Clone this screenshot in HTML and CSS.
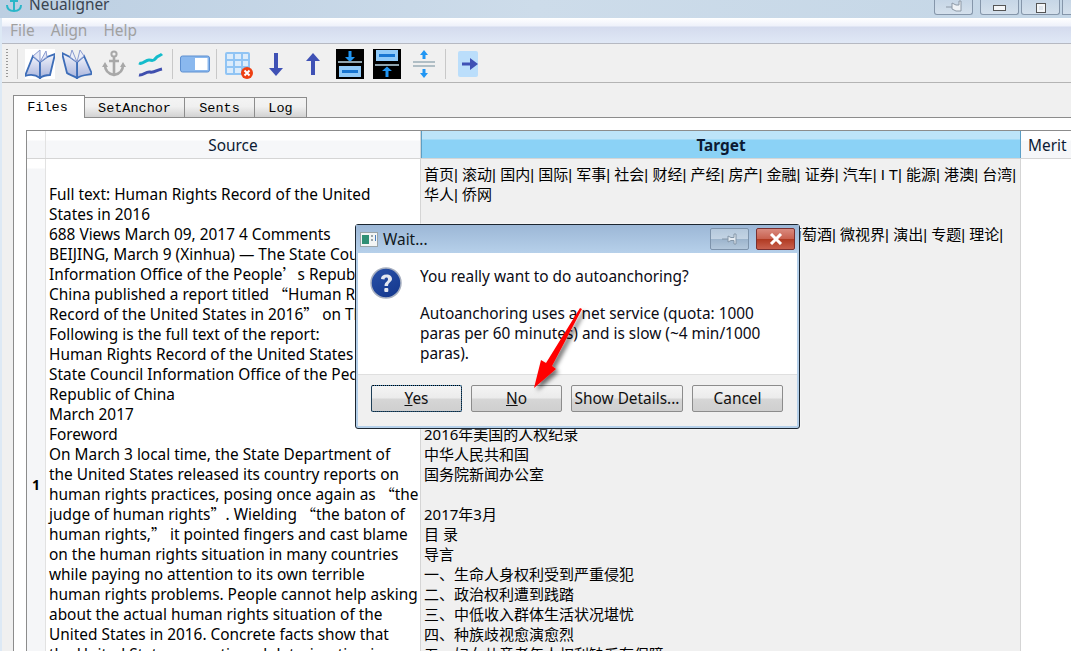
FILE: index.html
```html
<!DOCTYPE html>
<html>
<head>
<meta charset="utf-8">
<title>Neualigner</title>
<link rel="stylesheet" href="styles.css">
</head>
<body>

<div id="titlebar">
	<svg class="titleicon" width="16" height="14" viewBox="0 0 16 14"><path d="M8 0V12M4 2H12M1 6C1 10 4 12 8 12C12 12 15 10 15 6" fill="none" stroke="#2ab6c8" stroke-width="2"/></svg>
	<span class="titletext">Neualigner</span>
	<div class="winbuttons">
		<div class="winbtn pinbtn"><svg width="18" height="14" viewBox="0 0 18 14"><path d="M1 7H7M7 3L11 5H14V1H16V11H11L7 9Z" fill="#eef2f6" stroke="#8c98a6"/></svg></div>
		<div class="winbtn minbtn"><span class="minmark"></span></div>
		<div class="winbtn maxbtn"><span class="maxmark"></span></div>
		<div class="winbtn closebtn"></div>
	</div>
</div>

<div id="window">

	<div id="menubar">
		<span class="menuitem">File</span>
		<span class="menuitem">Align</span>
		<span class="menuitem">Help</span>
	</div>

	<div id="toolbar">
		<div class="grip"></div>
		<div class="toolsep"></div>
		<div class="toolbtn">
			<svg width="30" height="30" viewBox="0 0 30 30">
				<defs><linearGradient id="pagefill" x1="0" y1="0" x2="0" y2="1"><stop offset="0" stop-color="#f2f4fb"/><stop offset="1" stop-color="#a9b4dc"/></linearGradient></defs>
				<rect width="30" height="30" fill="#fff"/>
				<path d="M15 29C11 26 6 25 0 27L8 7L15 13Z" fill="url(#pagefill)" stroke="#3d6db8" stroke-width="1.8"/>
				<path d="M15 29C19 26 24 26 25 26L30 5L22 8L15 13Z" fill="url(#pagefill)" stroke="#3d6db8" stroke-width="1.8"/>
				<path d="M8 7L15 1L15 13L21 2L22 8L15 13Z" fill="#e4e8f6" stroke="#8a9bd0"/>
			</svg>
		</div>
		<div class="toolbtn">
			<svg width="30" height="30" viewBox="0 0 30 30">
				<path d="M15 29C19 26 24 26 30 25L22 7L15 13Z" fill="url(#pagefill)" stroke="#3d6db8" stroke-width="1.8"/>
				<path d="M15 29C11 26 7 26 5 24L0 4L8 8L15 13Z" fill="url(#pagefill)" stroke="#3d6db8" stroke-width="1.8"/>
				<path d="M8 8L10 1L15 13L18 1L22 7L15 13Z" fill="#eceff9" stroke="#8a9bd0"/>
			</svg>
		</div>
		<div class="toolbtn">
			<svg width="30" height="30" viewBox="0 0 30 30"><circle cx="15" cy="5" r="2.6" fill="none" stroke="#a8a8a8" stroke-width="2"/><path d="M15 8V26M10 12H20M6 16C6 22 10 25 15 26C20 25 24 22 24 16" fill="none" stroke="#a8a8a8" stroke-width="2.6"/><path d="M3 18L6 13L9 18ZM21 18L24 13L27 18Z" fill="#a8a8a8"/></svg>
		</div>
		<div class="toolbtn">
			<svg width="30" height="30" viewBox="0 0 30 30"><path d="M3 14C7 16 9 11 13 11C16 11 17 13 20 9C21 7 24 7 26 5" fill="none" stroke="#14bccb" stroke-width="3"/><path d="M3 26C7 27 10 22 14 23C18 24 21 21 26 20" fill="none" stroke="#3f4fae" stroke-width="3"/></svg>
		</div>
		<div class="toolsep"></div>
		<div class="toolbtn">
			<svg width="30" height="30" viewBox="0 0 30 30"><rect x="0.5" y="7" width="29" height="16" rx="2" fill="#8ab8ee" stroke="#5d8fd0"/><rect x="15" y="9" width="12.5" height="12" fill="#fff"/></svg>
		</div>
		<div class="toolsep"></div>
		<div class="toolbtn">
			<svg width="30" height="30" viewBox="0 0 30 30"><rect x="2" y="4" width="23" height="21" rx="1" fill="#dcecfb" stroke="#90c4f4" stroke-width="2"/><path d="M2 11H25M2 18H25M10 4V25M18 4V25" stroke="#90c4f4" stroke-width="2"/><circle cx="23" cy="24" r="6" fill="#ee3f12"/><path d="M20.5 21.5L25.5 26.5M25.5 21.5L20.5 26.5" stroke="#fff" stroke-width="2"/></svg>
		</div>
		<div class="toolbtn">
			<svg width="30" height="30" viewBox="0 0 30 30"><path d="M13 4H17V19H22L15 27L8 19H13Z" fill="#3f51b5"/></svg>
		</div>
		<div class="toolbtn">
			<svg width="30" height="30" viewBox="0 0 30 30"><path d="M13 26H17V12H22L15 4L8 12H13Z" fill="#3f51b5"/></svg>
		</div>
		<div class="toolbtn">
			<svg width="28" height="30" viewBox="0 0 28 30"><rect width="28" height="30" fill="#000"/><path d="M12.5 2H15.5V8H19L14 13L9 8H12.5Z" fill="#2196f3"/><rect x="2" y="12" width="24" height="2" fill="#90a4ae"/><rect x="3" y="17" width="22" height="11" fill="#90caf9"/><rect x="6" y="21" width="16" height="3" fill="#1976d2"/></svg>
		</div>
		<div class="toolbtn">
			<svg width="28" height="30" viewBox="0 0 28 30"><rect width="28" height="30" fill="#000"/><rect x="3" y="1" width="22" height="11" fill="#90caf9"/><rect x="6" y="5" width="16" height="3" fill="#1976d2"/><rect x="2" y="15" width="24" height="2" fill="#90a4ae"/><path d="M12.5 28H15.5V22H19L14 17.5L9 22H12.5Z" fill="#2196f3"/></svg>
		</div>
		<div class="toolbtn">
			<svg width="30" height="30" viewBox="0 0 30 30"><path d="M13.5 10H16.5V6H19L15 1L11 6H13.5ZM13.5 20H16.5V24H19L15 29L11 24H13.5Z" fill="#2196f3"/><rect x="4" y="12" width="22" height="2" fill="#b0bec5"/><rect x="4" y="16" width="22" height="2" fill="#b0bec5"/></svg>
		</div>
		<div class="toolsep"></div>
		<div class="toolbtn">
			<svg width="20" height="26" viewBox="0 0 20 26"><rect width="20" height="26" rx="2" fill="#bbdefb"/><path d="M4 11.5H12V7L20 13L12 19V14.5H4Z" fill="#3f51b5"/></svg>
		</div>
	</div>

	<div id="tabarea">
		<div id="tabs">
			<div class="tab tabactive">Files</div>
			<div class="tab tabsetanchor">SetAnchor</div>
			<div class="tab tabsents">Sents</div>
			<div class="tab tablog">Log</div>
		</div>

		<div id="tabpane">
			<div id="grid">
				<div class="headrow">
					<div class="corner"></div>
					<div class="colhead sourcehead">Source</div>
					<div class="colhead targethead">Target</div>
					<div class="colhead merithead">Merit</div>
				</div>
				<div class="datarow">
					<div class="rownum">1</div>
					<div class="cell sourcecell">
						<div>&nbsp;</div>
						<div>Full text: Human Rights Record of the United</div>
						<div>States in 2016</div>
						<div>688 Views March 09, 2017 4 Comments</div>
						<div>BEIJING, March 9 (Xinhua) — The State Council</div>
						<div>Information Office of the People<span class="wq">’</span>s Republic of</div>
						<div>China published a report titled <span class="wq">“</span>Human Rights</div>
						<div>Record of the United States in 2016<span class="wq">”</span> on Thursday.</div>
						<div>Following is the full text of the report:</div>
						<div>Human Rights Record of the United States in 2016</div>
						<div>State Council Information Office of the People's</div>
						<div>Republic of China</div>
						<div>March 2017</div>
						<div>Foreword</div>
						<div>On March 3 local time, the State Department of</div>
						<div>the United States released its country reports on</div>
						<div>human rights practices, posing once again as <span class="wq">“</span>the</div>
						<div>judge of human rights<span class="wq">”</span>. Wielding <span class="wq">“</span>the baton of</div>
						<div>human rights,<span class="wq">”</span> it pointed fingers and cast blame</div>
						<div>on the human rights situation in many countries</div>
						<div>while paying no attention to its own terrible</div>
						<div>human rights problems. People cannot help asking</div>
						<div>about the actual human rights situation of the</div>
						<div>United States in 2016. Concrete facts show that</div>
						<div>the United States, a continued deterioration in</div>
					</div>
					<div class="cell targetcell">
						<div class="navline">首页| 滚动| 国内| 国际| 军事| 社会| 财经| 产经| 房产| 金融| 证券| 汽车| I T| 能源| 港澳| 台湾|</div>
						<div class="navline">华人| 侨网</div>
						<div>&nbsp;</div>
						<div class="navline navindent">葡萄酒| 微视界| 演出| 专题| 理论|</div>
						<div>&nbsp;</div>
						<div>&nbsp;</div>
						<div>&nbsp;</div>
						<div>&nbsp;</div>
						<div>&nbsp;</div>
						<div>&nbsp;</div>
						<div>&nbsp;</div>
						<div>&nbsp;</div>
						<div>&nbsp;</div>
						<div>2016年美国的人权纪录</div>
						<div>中华人民共和国</div>
						<div>国务院新闻办公室</div>
						<div>&nbsp;</div>
						<div>2017年3月</div>
						<div>目 录</div>
						<div>导言</div>
						<div>一、生命人身权利受到严重侵犯</div>
						<div>二、政治权利遭到践踏</div>
						<div>三、中低收入群体生活状况堪忧</div>
						<div>四、种族歧视愈演愈烈</div>
						<div>五、妇女儿童老年人权利缺乏有保障</div>
					</div>
					<div class="cell meritcell"></div>
				</div>
			</div>
		</div>
	</div>

</div> <!-- ends div#window -->

<div id="dialog">
	<div class="dlgtitle">
		<svg class="dlgicon" width="18" height="15" viewBox="0 0 18 15"><rect x="0.5" y="0.5" width="17" height="14" fill="#f2f4f4" stroke="#9aa4a8"/><rect x="2" y="3" width="7" height="9" fill="#2f8f74"/><rect x="11" y="3" width="2" height="2" fill="#9aa4a8"/><rect x="11" y="7" width="2" height="2" fill="#9aa4a8"/><rect x="15" y="3" width="1" height="6" fill="#4a7fc0"/></svg>
		<span class="dlgcaption">Wait...</span>
		<div class="dlgpin"><svg width="18" height="12" viewBox="0 0 18 12"><path d="M1 6H7M7 3L10 4.5H13V1H15V11H13V7.5H10L7 9Z" fill="#e6ecf2" stroke="#8496a8"/></svg></div>
		<div class="dlgclose"><svg width="14" height="12" viewBox="0 0 14 12"><path d="M2 1L12 11M12 1L2 11" stroke="#fff" stroke-width="3"/></svg></div>
	</div>
	<div class="dlgbody">
		<svg class="dlgquestion" width="32" height="32" viewBox="0 0 32 32">
			<defs><linearGradient id="qfill" x1="0" y1="0" x2="0.6" y2="1"><stop offset="0" stop-color="#2a52a8"/><stop offset="1" stop-color="#163a90"/></linearGradient></defs>
			<circle cx="16" cy="16" r="15" fill="url(#qfill)" stroke="#a8b0c0" stroke-width="1.5"/>
			<path d="M11 12C11 9 13 7.5 16.5 7.5C20 7.5 22 9.5 22 12C22 15 18 15.500 18 19H14.500C14.500 15 18 14.500 18 12.500C18 11 17.500 10.500 16.300 10.500C15 10.500 14.500 11.500 14.500 12.500Z" fill="#e4e8f0"/>
			<rect x="14.300" y="21" width="4" height="4" rx="1" fill="#e4e8f0"/>
		</svg>
		<div class="dlgtext">
			<div class="dlgask">You really want to do autoanchoring?</div>
			<div>Autoanchoring uses a net service (quota: 1000</div>
			<div>paras per 60 minutes) and is slow (~4 min/1000</div>
			<div>paras).</div>
		</div>
	</div>
	<div class="dlgfooter">
		<div class="dlgbtn btndefault"><span class="focusbox"><u>Y</u>es</span></div>
		<div class="dlgbtn"><span><u>N</u>o</span></div>
		<div class="dlgbtn btnwide"><span>Show Details...</span></div>
		<div class="dlgbtn"><span>Cancel</span></div>
	</div>
</div>

<svg id="redarrow" width="70" height="100" viewBox="0 0 70 100">
	<defs><filter id="ashadow" x="-30%" y="-30%" width="160%" height="160%"><feDropShadow dx="3" dy="3" stdDeviation="2" flood-color="#000" flood-opacity="0.55"/></filter></defs>
	<path d="M55 5L57 6L27 63L31 66L9 85L16 57L21 60Z" fill="#f00" filter="url(#ashadow)"/>
</svg>

</body>
</html>
```

FILE: styles.css
```css
html, body{
	margin: 0;
	padding: 0;
}

body{
	position: relative;
	width: 1071px;
	height: 651px;
	overflow: hidden;
	background: #dde9f5;
	font-family: "Noto Sans", "Noto Sans CJK SC", sans-serif;
	font-size: 15.4px;
	color: #000;
}

#titlebar{
	height: 18px;
	display: flex;
	align-items: flex-end;
	background: linear-gradient(to right, #bccfe2, #cddcea 50%, #c4d6e6);
	overflow: hidden;
}

.titleicon{
	margin: 0 0 5px 6px;
}

.titletext{
	margin-left: 7px;
	color: #3a4450;
	line-height: 20px;
	margin-bottom: 3px;
}

.winbuttons{
	margin-left: auto;
	display: flex;
	align-self: flex-start;
}

.winbtn{
	box-sizing: border-box;
	height: 15px;
	border: 1px solid #8596aa;
	border-top: none;
	border-radius: 0 0 3px 3px;
	background: linear-gradient(to bottom, #c6d6e6, #d4e0ec);
	display: flex;
	align-items: flex-end;
	justify-content: center;
}

.pinbtn{
	width: 39px;
	margin-right: 7px;
}

.minbtn{
	width: 39px;
	margin-right: 2px;
}

.maxbtn{
	width: 39px;
	margin-right: 2px;
}

.closebtn{
	width: 9px;
	border-right: none;
	border-radius: 0;
}

.minmark{
	width: 11px;
	height: 4px;
	margin-bottom: 3px;
	background: #f4f6f8;
	border: 1px solid #555;
}

.maxmark{
	width: 4px;
	height: 4px;
	margin-bottom: 2px;
	background: #dfe6ee;
	border: 2px solid #f4f6f8;
	outline: 1px solid #555;
}

#window{
	margin-left: 2px;
	height: 633px;
	background: #f0f0f0;
	display: flex;
	flex-direction: column;
}

#menubar{
	height: 26px;
	box-sizing: border-box;
	padding: 3px 0 0 8px;
	display: flex;
	gap: 16px;
	background: linear-gradient(to bottom, #fff 0, #eef1fa 8px, #d4dbee 9px, #e0e8f6 100%);
	color: #a0a0a0;
	border-bottom: 1px solid #b6b9c2;
	line-height: 20px;
	flex: none;
}

#toolbar{
	height: 39px;
	box-sizing: border-box;
	padding: 1px 0 0 4px;
	display: flex;
	align-items: center;
	border-bottom: 1px solid #b4b4b4;
	flex: none;
}

.grip{
	width: 2px;
	height: 30px;
	margin-right: 6px;
	background: repeating-linear-gradient(to bottom, #999 0 1px, transparent 1px 3px);
}

.toolsep{
	width: 7px;
	height: 30px;
	flex: none;
	background: linear-gradient(#c8c8c8, #c8c8c8) center / 1px 100% no-repeat;
}

.toolbtn{
	width: 37px;
	height: 30px;
	flex: none;
	display: flex;
	align-items: center;
	justify-content: center;
}

#tabarea{
	flex: 1;
	min-height: 0;
	padding: 11px 0 0 11px;
	display: flex;
	flex-direction: column;
}

#tabs{
	display: flex;
	align-items: flex-end;
	height: 23px;
	flex: none;
	position: relative;
	z-index: 1;
	font-family: "Liberation Mono", monospace;
	font-size: 13.5px;
}

.tab{
	box-sizing: border-box;
	height: 20px;
	text-align: center;
	line-height: 22px;
	border: 1px solid #8c8c8c;
	border-bottom: none;
	border-left: none;
	background: linear-gradient(to bottom, #f4f4f4 0, #f0f0f0 45%, #d2d2d2 100%);
}

.tabactive{
	height: 23px;
	width: 72px;
	padding-right: 3px;
	border-left: 1px solid #8c8c8c;
	background: #fff;
	line-height: 24px;
	margin-bottom: -1px;
}

.tabsetanchor{
	width: 100px;
}

.tabsents{
	width: 70px;
}

.tablog{
	width: 52px;
}

#tabpane{
	flex: 1;
	min-height: 0;
	background: #fff;
	border-top: 1px solid #8c8c8c;
	border-left: 1px solid #8c8c8c;
	padding: 12px 0 0 12px;
}

#grid{
	height: 100%;
	border-top: 1px solid #8c8c8c;
	border-left: 1px solid #8c8c8c;
	overflow: hidden;
}

.headrow{
	display: flex;
	height: 28px;
	box-sizing: border-box;
	border-bottom: 1px solid #d5d5d5;
}

.corner{
	width: 19px;
	flex: none;
	background: linear-gradient(to bottom, #fff 0, #fff 9px, #f5f6f8 10px);
	border-right: 1px solid #e2e2e2;
	box-sizing: border-box;
}

.colhead{
	text-align: center;
	line-height: 30px;
	background: linear-gradient(to bottom, #fff 0, #fff 9px, #f6f7f9 10px);
	box-sizing: border-box;
	flex: none;
	color: #0b1a33;
}

.sourcehead{
	width: 375px;
	border-right: 1px solid #d5d5d5;
}

.targethead{
	width: 600px;
	font-weight: bold;
	background: linear-gradient(to bottom, #bde4f9 0, #bde4f9 8px, #8bd2f6 9px);
	border-right: 1px solid #5c9fc6;
	border-left: 1px solid #5c9fc6;
}

.merithead{
	width: 60px;
	text-align: left;
	padding-left: 7px;
}

.datarow{
	display: flex;
	height: 650px;
}

.rownum{
	width: 19px;
	flex: none;
	box-sizing: border-box;
	background: linear-gradient(to bottom, #fff 0, #fff 9px, #f5f6f8 10px);
	border-right: 1px solid #e2e2e2;
	font-weight: bold;
	display: flex;
	align-items: center;
	justify-content: center;
	font-size: 14px;
}

.cell{
	box-sizing: border-box;
	padding: 5px 0 0 3px;
	line-height: 20px;
	flex: none;
	white-space: nowrap;
	overflow: hidden;
}

.sourcecell{
	width: 375px;
	padding-top: 6px;
	background: #fff;
	border-right: 1px solid #d5d5d5;
}

.targetcell{
	width: 600px;
	font-size: 15px;
	background: #f0f0f0;
	border-right: 1px solid #d5d5d5;
}

.navline{
	font-family: "Liberation Sans", "Noto Sans CJK SC", sans-serif;
	line-height: 22px;
	margin-bottom: -2px;
}

.navindent{
	padding-left: 363px;
}

.meritcell{
	width: 60px;
	background: #fff;
}

.wq{
	font-family: "Noto Sans CJK SC", sans-serif;
	font-size: 15px;
	line-height: 1;
}

#dialog{
	position: absolute;
	left: 355px;
	top: 224px;
	width: 445px;
	height: 205px;
	box-sizing: border-box;
	border: 1px solid #1c2630;
	border-radius: 3px;
	background: #b5d0ea;
	padding: 0 2px 2px 2px;
	display: flex;
	flex-direction: column;
	box-shadow: 0 0 0 1px rgba(255,255,255,0.3);
}

.dlgtitle{
	height: 28px;
	flex: none;
	display: flex;
	align-items: center;
	margin: 0 -2px;
	padding: 0 4px;
	background: linear-gradient(to bottom, #9cb7d6, #b6d0ea);
}

.dlgcaption{
	margin-left: 5px;
	color: #101820;
}

.dlgpin{
	margin-left: auto;
	box-sizing: border-box;
	width: 39px;
	height: 22px;
	border: 1px solid #7d93ab;
	border-radius: 2px;
	background: linear-gradient(to bottom, #b4c8dc 0, #c4d4e4 50%, #9cb4cc 51%, #b4c8dc 100%);
	display: flex;
	align-items: center;
	justify-content: center;
}

.dlgclose{
	margin-left: 7px;
	box-sizing: border-box;
	width: 39px;
	height: 22px;
	border: 1px solid #7a3030;
	border-radius: 2px;
	background: linear-gradient(to bottom, #d98a7e 0, #c8604e 50%, #b03a22 51%, #c8604e 100%);
	display: flex;
	align-items: center;
	justify-content: center;
}

.dlgbody{
	flex: none;
	height: 122px;
	box-sizing: border-box;
	background: #fff;
	border-bottom: 1px solid #dfdfdf;
	display: flex;
	padding: 14px 0 0 12px;
}

.dlgquestion{
	flex: none;
}

.dlgtext{
	margin-left: 18px;
	line-height: 20px;
	white-space: nowrap;
	color: #0a0a14;
}

.dlgask{
	margin-bottom: 17px;
}

.dlgfooter{
	flex: 1;
	background: #f0f0f0;
	display: flex;
	gap: 9px;
	padding: 10px 0 0 13px;
}

.dlgbtn{
	box-sizing: border-box;
	width: 91px;
	height: 27px;
	border: 1px solid #8c8c8c;
	border-radius: 2px;
	background: linear-gradient(to bottom, #f4f4f4 0, #ebebeb 48%, #d6d6d6 52%, #cfcfcf 100%);
	display: flex;
	align-items: center;
	justify-content: center;
	color: #111;
}

.btnwide{
	width: 112px;
}

.btndefault{
	border: 1px solid #3c7fb1;
	outline: 1px dotted #000;
	outline-offset: -1px;
}

#redarrow{
	position: absolute;
	left: 525px;
	top: 303px;
}
```
